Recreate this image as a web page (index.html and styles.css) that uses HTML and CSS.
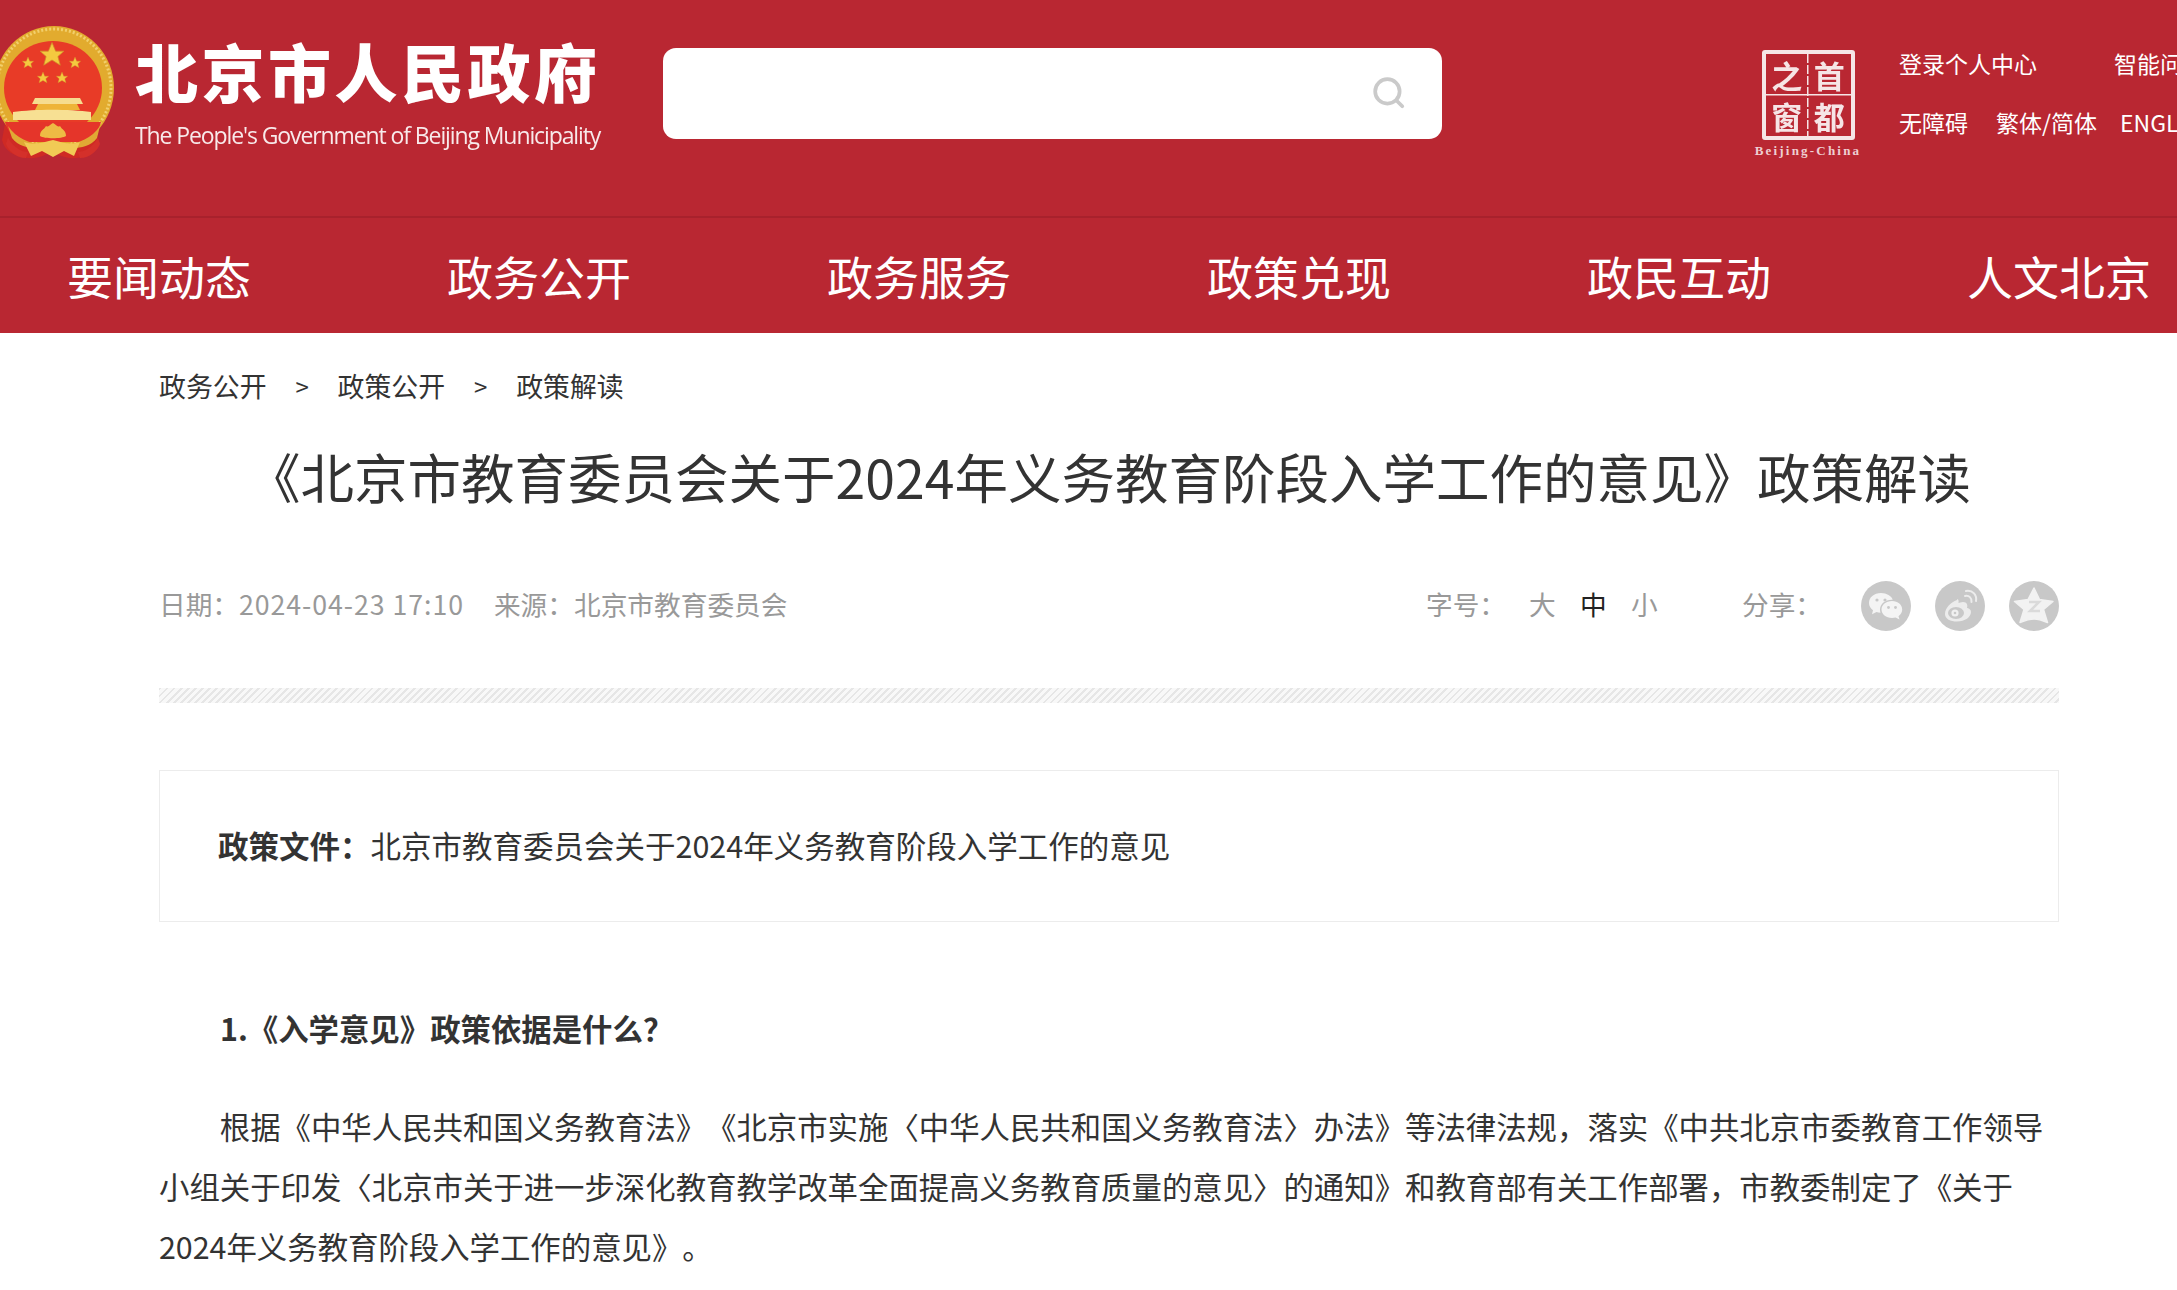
FILE: index.html
```html
<!DOCTYPE html>
<html lang="zh-CN">
<head>
<meta charset="utf-8">
<title>《北京市教育委员会关于2024年义务教育阶段入学工作的意见》政策解读</title>
<link rel="stylesheet" href="styles.css">
</head>
<body>
<header class="top">
  <div class="brand">
    <svg class="emblem" viewBox="0 0 120 140" aria-hidden="true">
      <defs>
        <path id="st" d="M0-10 2.900-3.100 9.500-3.100 4.700 1.200 6.600 8.100 0 4-6.600 8.100-4.700 1.200-9.500-3.100-2.900-3.100z"/>
      </defs>
      <path d="M6 96 2 118c2 10 12 17 26 18 10 1 18-3 24-7 6 4 14 8 24 7 12-1 22-8 22-18l-4-22z" fill="#cf2a24"/>
      <ellipse cx="54" cy="66" rx="60" ry="62" fill="#e2ab2e"/>
      <ellipse cx="54" cy="66" rx="57" ry="59" fill="none" stroke="#f2cf6c" stroke-width="3" stroke-dasharray="2 2"/>
      <ellipse cx="53" cy="66" rx="49" ry="47" fill="#e83b27"/>
      <g fill="#f4c93f" stroke="#cf8f2a" stroke-width=".6">
        <use href="#st" transform="translate(52 33) scale(1.250)"/>
        <use href="#st" transform="translate(28 41) scale(.6)"/>
        <use href="#st" transform="translate(75 41) scale(.6)"/>
        <use href="#st" transform="translate(43 56) scale(.6)"/>
        <use href="#st" transform="translate(62 56) scale(.6)"/>
      </g>
      <path d="M35 76h45l3 6H32z" fill="#f6dc8e"/>
      <path d="M38 82h39l3 6H35z" fill="#eeb437"/>
      <path d="M13 90c22-3 56-3 78 0v8H13z" fill="#f7e093"/>
      <path d="M5 100h96c-2 8-8 16-14 20H19C13 116 7 108 5 100z" fill="#e5352a"/>
      <path d="M40 114c0-6 4-6 6-10 3 2 4-2 7-3 3 1 4 5 7 3 2 4 6 4 6 10-4 3-22 3-26 0z" fill="#eebb44"/>
      <path d="M8 104c8 12 22 18 34 18h24c12 0 26-6 34-18l-3 12c-6 8-16 10-24 10H36c-8 0-18-2-24-10z" fill="#e0a934"/>
      <path d="M24 120c10 3 18 1 29-2 10 3 18 5 27 2l-6 14-10-5-11 6-11-6-11 5z" fill="#f1ca55"/>
      <path d="M8 116c6 10 14 14 20 14l-2 6c-10 0-18-8-20-14zM98 116c-6 10-14 14-20 14l2 6c10 0 18-8 20-14z" fill="#d4302a"/>
    </svg>
    <div class="brand-text">
      <div class="brand-cn">北京市人民政府</div>
      <div class="brand-en">The People's Government of Beijing Municipality</div>
    </div>
  </div>
  <div class="search">
    <svg class="search-icon" viewBox="0 0 32 32" aria-hidden="true">
      <circle cx="14.500" cy="14.500" r="11.500" fill="none" stroke="#cacaca" stroke-width="3.500"/>
      <path d="M23.500 23.500l5 5" stroke="#cacaca" stroke-width="3.500" stroke-linecap="round"/>
    </svg>
  </div>
  <div class="seal-wrap">
    <div class="seal">
      <span>之</span><span>首</span><span>窗</span><span>都</span>
    </div>
    <div class="seal-en">Beijing-China</div>
  </div>
  <div class="links">
    <div class="links-row links-row-a"><span>登录个人中心</span><span>智能问答</span></div>
    <div class="links-row links-row-b"><span>无障碍</span><span>繁体/简体</span><span class="en">ENGLISH</span></div>
  </div>
</header>
<nav class="nav">
  <a>要闻动态</a><a>政务公开</a><a>政务服务</a><a>政策兑现</a><a>政民互动</a><a>人文北京</a>
</nav>
<main class="main">
  <div class="crumb"><span>政务公开</span><i>&gt;</i><span>政策公开</span><i>&gt;</i><span>政策解读</span></div>
  <h1 class="title">《北京市教育委员会关于2024年义务教育阶段入学工作的意见》政策解读</h1>
  <div class="meta">
    <div class="meta-left"><span>日期：<span class="date">2024-04-23 17:10</span></span><span>来源：北京市教育委员会</span></div>
    <div class="meta-right">
      <span class="fs-label">字号：</span>
      <span class="fs">大</span><span class="fs fs-on">中</span><span class="fs">小</span>
      <span class="share-label">分享：</span>
      <span class="ico">
        <svg viewBox="0 0 50 50" aria-hidden="true">
          <path d="M20 12c-7 0-12 4.400-12 10 0 3 1.500 5.500 4 7.300l-1 4 4.500-2.300c1.200.4 2.600.6 4 .7-.3-1-.5-2-.5-3 0-5.800 5.300-10 11.700-10h1C30.500 15 25.700 12 20 12z" fill="#f4f4f4"/>
          <path d="M31 20c-6 0-10.500 3.700-10.500 8.500S25 37 31 37c1.300 0 2.500-.2 3.600-.5l3.900 2.100-1-3.400c2.300-1.700 3.700-4.100 3.700-6.700C41.200 23.700 37 20 31 20z" fill="#f4f4f4"/>
          <circle cx="16" cy="19" r="1.600" fill="#c8c8c8"/><circle cx="24" cy="19" r="1.600" fill="#c8c8c8"/>
          <circle cx="27.500" cy="26.500" r="1.400" fill="#c8c8c8"/><circle cx="34.500" cy="26.500" r="1.400" fill="#c8c8c8"/>
        </svg>
      </span>
      <span class="ico">
        <svg viewBox="0 0 50 50" aria-hidden="true">
          <path d="M22 19c-6 2-12 8-12 14 0 5 5.500 7.500 12 7.500 8 0 14-4.500 14-9.500 0-3-3-4-4-4 1-3 0-6-4-6-2 0-3.500 1-4.500 1 .5-3-.5-4.500-1.500-3.500z" fill="#ececec"/>
          <ellipse cx="21" cy="32" rx="8" ry="6" fill="#c8c8c8"/>
          <circle cx="20" cy="32" r="3.600" fill="#f0f0f0"/><circle cx="20" cy="32" r="1.300" fill="#c8c8c8"/>
          <path d="M30 15c4-1 7 2 6.500 6M31 10c7-1 11 4 10 10" fill="none" stroke="#ececec" stroke-width="2" stroke-linecap="round"/>
        </svg>
      </span>
      <span class="ico">
        <svg viewBox="0 0 50 50" aria-hidden="true">
          <path d="M25 7l5.500 11.500 13.500 2-9.500 8 4 13c-5-2-9-3.500-13.500-3.500S16 39.500 11 41.500l4-13-9.500-8 13.500-2z" fill="#f2f2f2" stroke="#f2f2f2" stroke-width="1.500" stroke-linejoin="round"/>
          <path d="M20 21h10l-9 9h10" fill="none" stroke="#dadada" stroke-width="2.500"/>
        </svg>
      </span>
    </div>
  </div>
  <div class="stripe"></div>
  <div class="doc"><b>政策文件：</b>北京市教育委员会关于2024年义务教育阶段入学工作的意见</div>
  <p class="q">1.《入学意见》政策依据是什么？</p>
  <p class="para">根据《中华人民共和国义务教育法》《北京市实施〈中华人民共和国义务教育法〉办法》等法律法规，落实《中共北京市委教育工作领导小组关于印发〈北京市关于进一步深化教育教学改革全面提高义务教育质量的意见〉的通知》和教育部有关工作部署，市教委制定了《关于2024年义务教育阶段入学工作的意见》。</p>
</main>
</body>
</html>
```
FILE: styles.css
```css
* { box-sizing: border-box; }
html, body { margin: 0; padding: 0; }
body {
  width: 2177px;
  height: 1290px;
  overflow: hidden;
  background: #fff;
  color: #333;
  font-family: "Noto Sans CJK SC", "Noto Sans", sans-serif;
  text-spacing-trim: space-all;
}
.top {
  height: 218px;
  background: #b92732;
  border-bottom: 2px solid #a8212c;
  display: flex;
  overflow: hidden;
}
.brand { display: flex; width: 663px; flex: none; }
.emblem { width: 120px; height: 140px; margin: 22px 0 0 0; flex: none; filter: blur(.7px); }
.brand-text { margin-left: 15px; color: #fff; }
.brand-cn {
  margin-top: 31px;
  font-size: 63px;
  line-height: 78px;
  font-weight: 900;
  letter-spacing: 3.500px;
  white-space: nowrap;
  filter: blur(.5px);
}
.brand-en {
  margin-top: 11px;
  font-family: "Open Sans", sans-serif;
  font-size: 23px;
  line-height: 30px;
  letter-spacing: -1.100px;
  white-space: nowrap;
  opacity: .9;
  filter: blur(.4px);
}
.search {
  width: 779px;
  height: 91px;
  margin-top: 48px;
  flex: none;
  background: #fff;
  border-radius: 13px;
  display: flex;
  align-items: center;
  justify-content: flex-end;
  padding: 0 36px 2px 0;
}
.search-icon { width: 34px; height: 34px; filter: blur(.4px); }
.seal-wrap { width: 106px; margin: 50px 0 0 313px; flex: none; }
.seal {
  width: 93px;
  height: 90px;
  margin: 0 auto;
  border: 4px solid #f6e5e6;
  border-radius: 3px;
  display: grid;
  grid-template-columns: 1fr 1fr;
  grid-template-rows: 1fr 1fr;
  color: #f6e5e6;
  font-size: 31px;
  font-weight: 700;
  line-height: 41px;
  text-align: center;
  filter: blur(.5px);
  background:
    repeating-linear-gradient(#f6e5e6 0 9px, transparent 9px 11px) center / 1.500px 100% no-repeat,
    linear-gradient(#f6e5e6, #f6e5e6) center / 100% 1.500px no-repeat;
}
.seal span { display: block; }
.seal-en {
  margin: 4px -6px 0;
  font-family: "Liberation Serif", serif;
  font-size: 13px;
  line-height: 14px;
  font-weight: 700;
  letter-spacing: 2.200px;
  color: #eecfd2;
  white-space: nowrap;
  text-align: center;
}
.links { margin-left: 38px; color: #fff; font-size: 23px; flex: none; white-space: nowrap; }
.links-row { display: flex; line-height: 32px; }
.links-row-a { margin-top: 47px; gap: 77px; }
.links-row-b { margin-top: 27px; gap: 28px; }
.links-row-b .en { margin-left: -5px; }
.nav {
  height: 115px;
  background: #b92732;
  display: flex;
  padding: 0 0 2px 67px;
  gap: 198px;
  align-items: center;
}
.nav a { font-size: 46px; line-height: 60px; color: #fff; white-space: nowrap; width: 182px; }
.main { margin-left: 159px; width: 1900px; }
.crumb { display: flex; height: 104px; align-items: center; font-size: 26.900px; color: #333; }
.crumb i { font-style: normal; width: 71px; text-align: center; font-size: 24px; }
.title {
  margin: 0;
  height: 78px;
  line-height: 78px;
  font-size: 53.500px;
  font-weight: 400;
  text-align: center;
  white-space: nowrap;
  color: #333;
}
.meta {
  margin-top: 66px;
  height: 50px;
  display: flex;
  justify-content: space-between;
  align-items: center;
  font-size: 26.700px;
  color: #999;
}
.meta-left { display: flex; gap: 30px; padding-bottom: 6px; }
.date { letter-spacing: .95px; }
.meta-right { display: flex; align-items: center; }
.fs-label { width: 103px; padding-bottom: 6px; }
.fs { width: 51px; padding-bottom: 6px; }
.fs-on { color: #222; }
.share-label { margin-left: 60px; width: 119px; padding-bottom: 6px; }
.ico { width: 50px; height: 50px; border-radius: 50%; background: #c8c8c8; margin-right: 24px; display: block; }
.ico:last-child { margin-right: 0; }
.ico svg { display: block; width: 50px; height: 50px; filter: blur(.5px); }
.stripe {
  margin-top: 57px;
  height: 15px;
  background: repeating-linear-gradient(135deg, #e6e6e6 0 2px, #f8f8f8 2px 5px);
}
.doc {
  margin-top: 67px;
  height: 152px;
  border: 1px solid #ececec;
  padding: 0 0 2px 58px;
  display: flex;
  align-items: center;
  font-size: 30.500px;
  color: #333;
  white-space: nowrap;
}
.doc b { font-weight: 700; }
.q { margin: 76px 0 0 61px; font-size: 30.400px; line-height: 60px; font-weight: 700; }
.para { margin: 39px 0 0; font-size: 30.400px; line-height: 59.800px; text-indent: 2em; color: #333; }
```
